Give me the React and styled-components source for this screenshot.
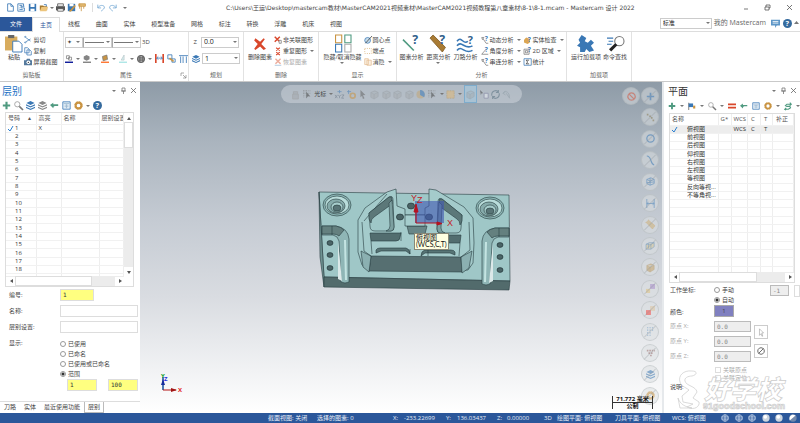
import React from 'react';
import styled, { createGlobalStyle } from 'styled-components';

const GlobalStyle = createGlobalStyle`
  * { box-sizing: border-box; }
  body { margin: 0; }
  body, button, input, select, table {
    font: 6px/8px "Open Sans", "Noto Sans CJK SC", sans-serif;
    color: #444;
  }
  button { background: none; border: 0; padding: 0; white-space: nowrap; }
  input, select { min-width: 0; }
  svg { display: block; flex: none; overflow: visible; }
`;

const blue = '#3a78b5';
const green = '#4f9a80';
const orange = '#c99443';
const red = '#d9472b';
const grey = '#777';

const drawings = {
  page: <path d="M2 1h4l3 3v6H2zM6 1v3h3" fill="#fff" stroke={blue} />,
  pages: <path d="M1 1h7v3M1 1v9h8V6H5V4h4M3 3h3M3 6h1M3 8h4" fill="none" stroke={blue} />,
  save: <><path d="M1 1h9v9H1z" fill={blue} /><path d="M3 1h5v4H3zM3 7h5v3H3z" fill="#fff" /></>,
  open: <><path d="M1 3h4l1 1h4v5H1z" fill="#a57a31" /><path d="M3 5h8l-2 5H1z" fill="#edc57c" /><path d="M6 2h3v2" stroke={blue} fill="none" /></>,
  print: <><path d="M0 4h11v5H0z" fill="#555" /><path d="M2 1h7v3H2zM2 7h7v3H2z" fill="#fff" stroke="#555" /></>,
  saveAs: <><path d="M1 1h9v9H1z" fill={blue} /><path d="M3 1h5v3H3z" fill="#fff" /><path d="M10 3L5 9l-2 1" stroke={orange} strokeWidth="2" /></>,
  brush: <path d="M1 1h8v3H1zM4 4v6M2 1v6M7 4v3" fill="#e3bc75" stroke={orange} />,
  undo: <path d="M1 2v4h4M1 6c3-5 9-3 8 0-1 2-3 3-4 4" fill="none" stroke="#76a9d4" />,
  redo: <path d="M10 2v4H6M10 6C7 1 1 3 2 6c1 2 3 3 4 4" fill="none" stroke="#76a9d4" />,
  paste: <><path d="M0 1h8v9H0z" fill="#d8ac5e" /><path d="M2 0h4v2H2z" fill="#666" /><path d="M5 4h4l2 2v5H5z" fill="#fff" stroke={blue} strokeWidth=".6" /></>,
  cut: <path d="M1 1l8 6M1 9l8-5M1 8a1 1 0 1 0 2 1M1 2a1 1 0 1 1 2-1" fill="none" stroke={blue} />,
  copy: <path d="M1 1h4l2 2v5H1zM4 4h4l2 2v5H4z" fill="#fff" stroke={blue} />,
  camera: <><path d="M0 3h3l1-2h4l1 2h2v7H0z" fill="#557a9d" /><circle cx="6" cy="6" r="2.5" fill="#fff" /><circle cx="6" cy="6" r="1" fill="#333" /></>,
  cross: <path d="M2 1l4 3 3-3 1 1-3 4 4 4-2 1-3-3-4 3-1-1 3-4-3-3z" fill={red} />,
  crossBox: <><path d="M1 1l7 7M8 1L1 8" stroke={red} strokeWidth="2" /><path d="M7 6h3v4H7z" fill="#fff" stroke={grey} /></>,
  crossTwo: <path d="M3 1l5 4M8 1L3 5M3 7l5 4M8 7l-5 4" stroke={red} strokeWidth="1.5" />,
  crossPale: <><path d="M2 1l7 7M9 1L2 8" stroke="#ecac9b" strokeWidth="2" /><path d="M1 10h9" stroke="#93b8d6" /></>,
  hide: <g fill="#fff" strokeWidth=".7"><path d="M1 0h4v5H1z" stroke={orange} /><path d="M7 0h4v5H7z" stroke={green} /><path d="M1 6h4v5H1z" stroke={blue} /><path d="M7 6h4v5H7z" stroke="#aaa" /></g>,
  center: <><circle cx="5" cy="6" r="4" fill="#c6dceb" stroke={blue} /><path d="M2 10L11 0" stroke="#333" /></>,
  ends: <path d="M1 2h9v7H1z" fill="none" stroke={orange} strokeDasharray="1 2" />,
  blank: <path d="M1 1h5v8H1zM4 3h6v7H4z" fill="#fcf1e3" stroke="#e4bd94" />,
  analyze: <><path d="M0 3l7 7" stroke={green} /><text x="6" y="6" fontSize="8" fontWeight="700" fill="#315f8c">?</text></>,
  distance: <><path d="M0 2l2-2 8 8-2 3z" fill="#a97b34" stroke="#79551d" strokeWidth=".5" /><text x="6" y="6" fontSize="8" fontWeight="700" fill="#315f8c">?</text></>,
  waves: <><path d="M0 4c3-4 4 3 7 0M0 7c3-4 5 3 10 0M0 10c3-4 5 3 10 0" fill="none" stroke={blue} /><text x="7" y="6" fontSize="7" fontWeight="700" fill="#315f8c">?</text></>,
  dynamic: <><path d="M1 2h3L2 5zM3 4l4 6h3" fill="none" stroke={grey} /><text x="5" y="7" fontSize="9" fontWeight="700" fill={blue}>?</text></>,
  angle: <><path d="M7 3L1 10h9" fill="none" stroke={grey} /><text x="5" y="7" fontSize="9" fontWeight="700" fill={blue}>?</text></>,
  solidCheck: <><path d="M0 5l3-3 5 2v5l-3 2-5-2z" fill="#dba653" /><text x="5" y="8" fontSize="9" fontWeight="700" fill={blue}>?</text></>,
  area: <><path d="M0 3h7v7H0zM2 5h3v3H2z" fill="none" stroke={grey} /><text x="5" y="7" fontSize="9" fontWeight="700" fill={blue}>?</text></>,
  sum: <><path d="M0 1h10v9H0z" fill="#fff" stroke={blue} /><path d="M7 3H3l2 2.5L3 8h4" fill="none" stroke="#333" /></>,
  puzzle: <path d="M1 3l2-3 3 2-1 2 2 1 2-2 2 2-2 2 2 3-3 1-2-2-1 2H2V8L0 7l2-2z" fill={blue} />,
  finder: <><circle cx="8" cy="4" r="3" fill="#fff" stroke="#777" strokeWidth=".7" /><path d="M2 10l4-4" stroke="#222" strokeWidth="2" /><path d="M0 2h4M1 4h3M0 6h3" stroke={blue} strokeWidth=".7" /></>,
  wireColor: <><path d="M2 1h4v4H2zM5 3h4v4H5z" fill="none" stroke={grey} /><path d="M0 9h11v2H0z" fill="#111e9b" /></>,
  solidColor: <><path d="M5 0l4 2v4L5 8 1 6V2z" fill="#858585" /><path d="M0 9h11v2H0z" fill="#858585" /></>,
  surfaceColor: <><path d="M2 2l6-2 1 6-6 2z" fill={orange} stroke={grey} /><path d="M0 9h11v2H0z" fill="#ff7a37" /></>,
  pointColor: <><path d="M3 7l4-7v7z" fill="#d9eff0" stroke="#b7c9ca" /><path d="M0 9h11v2H0z" fill="#afe7e7" /></>,
  globe: <><circle cx="5.5" cy="5.5" r="5" fill="#aaa" stroke="#444" /><path d="M1 4h9M1 7h9M4 1v9M8 1v9" stroke="#555" /></>,
  levelMove: <><path d="M1 0v11M10 0v11" stroke={red} strokeWidth="2" /><path d="M2 5h7M4 3L2 5l2 2M7 3l2 2-2 2" fill="none" stroke={blue} /></>,
  squares: <><path d="M1 1h5v5H1zM6 6h4v4H6z" fill="#fff" stroke={blue} /><path d="M3 5l5 4" stroke={orange} strokeWidth="2" /></>,
  comb: <path d="M0 2h11M2 3v8M5 3v8M9 3v8" stroke={blue} fill="none" />,
  layers: <path d="M5.5 0l5 2.5-5 2.5-5-2.5zM0 4l5.500 2.500L11 4v1.500L5.500 8 0 5.500zM0 7l5.500 2.500L11 7v1.500L5.500 11 0 8.500z" fill={blue} />,
  layersGrey: <path d="M5.5 0l5 2.500-5 2.500-5-2.500zM0 4l5.500 2.500L11 4v1.500L5.500 8 0 5.500zM0 7l5.500 2.500L11 7v1.500L5.500 11 0 8.500z" fill="#888" />,
  plus: <path d="M5.500 1v9M1 5.500h9" stroke={green} strokeWidth="2.600" />,
  search: <><circle cx="4" cy="4" r="3.200" fill="none" stroke="#999" /><path d="M6.500 6.500L11 11" stroke="#777" strokeWidth="2" /></>,
  back: <path d="M0 5l4-3v2h6v2H6c-1 0-2 1-2 3z" fill={green} />,
  sheet: <><path d="M1 1h9v9H1z" fill="#edf4fa" stroke={blue} /><path d="M2 3h7M3 5h5M3 7h5M5.500 4v5" stroke="#9ab8d0" /></>,
  gear: <><circle cx="5.500" cy="5.500" r="3.500" fill="none" stroke={orange} strokeWidth="2.500" /><circle cx="5.500" cy="5.500" r="4.700" fill="none" stroke={orange} strokeDasharray="2 1.700" /></>,
  help: <><circle cx="5.500" cy="5.500" r="5.500" fill="#356a9d" /><text x="3.200" y="9" fontSize="9" fontWeight="700" fill="#fff">?</text></>,
  chat: <><path d="M0 1h11v7H7l-2 3V8H0z" fill="#5d96c7" /><path d="M2 3h7M2 5h7" stroke="#fff" /></>,
  flag: <><path d="M1 1v10" stroke="#555" /><path d="M1 2h6v5H1z" fill={blue} /><path d="M7 5h3v4H7z" fill={orange} /></>,
  equal: <path d="M0 2h11v2.500H0zM0 6.500h11V9H0z" fill={red} />,
  cycle: <path d="M9 3H4L2 5l2 1h4l1 2-3 2H1M8 1l2 2-2 2M3 8l-2 2 2 1" fill="none" stroke={green} strokeWidth="1.500" />,
  cube: <path d="M1 3l5-2 4 2v5l-5 3-4-2zM1 3l4 2 5-2M5 5v6" fill="#c7a469" stroke="#a8874f" strokeWidth=".6" />,
  cubeGrey: <path d="M1 3l5-2 4 2v5l-5 3-4-2zM1 3l4 2 5-2M5 5v6" fill="#a8adb2" stroke="#8b9197" strokeWidth=".6" />,
  lock: <path d="M2 5h7v6H2zM3 5V2h5v3" fill="#a3a8ad" stroke="#999" />,
  cursor: <path d="M3 0l6 6-3 .5L8 10l-2 1-1-4-2 2z" fill="#666" />,
  selectBox: <><path d="M0 1h10M0 4h10M1 0v10M4 0v10" stroke="#777" strokeDasharray="1" /><path d="M4 2l5 6-3-.5-2 3z" fill="#444" /></>,
  xyz: <><path d="M5.500 0v4M3 2h5" stroke={blue} /><path d="M0 6l3 4M3 6l-3 4M4 6l1.500 2L7 6M5.500 8v2M8 6h3l-3 4h3" fill="none" stroke="#567" strokeWidth=".8" /></>,
  plusGear: <><path d="M2 0v5M0 2h5" stroke={blue} /><circle cx="7" cy="7" r="3" fill="none" stroke={orange} strokeWidth="2" /></>,
  pie: <><circle cx="5.500" cy="5.500" r="5" fill="#c3a777" /><path d="M5 0v6l5 3c2-4 0-9-5-9" fill={blue} /></>,
  window: <path d="M1 1h9v9H1z" fill="#dfb878" stroke="#b98a3c" strokeDasharray="1" />,
  pickDoc: <><path d="M0 0l4 4-2 0-1 2z" fill="#444" /><path d="M5 4h5v6H5z" fill="#e8eef2" stroke="#779" /></>,
  spin: <path d="M1 7c-1-6 6-8 8-4M10 4c1 6-6 8-8 4M9 0v3H6M2 11V8h3" fill="none" stroke="#577180" strokeWidth="1.300" />,
  turn: <path d="M0 4c3-4 8-2 8 6M3 1L0 4l3 2M4 4l4 6" fill="none" stroke="#8b99a2" />,
  bluePlus: <path d="M5.500 1v9M1 5.500h9" stroke={blue} strokeWidth="2" />,
  points: <path d="M1 2h2M4 4h2M6 6h2M8 9h2" stroke="#887a52" strokeWidth="2" />,
  ring: <circle cx="5.500" cy="5.500" r="4.500" fill="none" stroke={blue} strokeWidth="1.500" />,
  curve: <path d="M1 0c6 0 4 10 9 11" stroke={blue} fill="none" strokeWidth="1.500" />,
  wireCube: <path d="M1 3l5-2 4 2v5l-5 2-4-2zM1 3l4 2 5-2M5 1v9M1 7l9-1" fill="none" stroke={blue} />,
  dimension: <path d="M1 0v11M10 0v11M1 5.500h9M3 4L1 5.500 3 7M8 4l2 1.500L8 7" fill="none" stroke={blue} />,
  ruler: <path d="M0 3l3-3 8 7-3 4z" fill="#cdb078" stroke={orange} strokeDasharray="1" />,
  meshCube: <path d="M0 4l4-2h6v5l-4 3H0zM0 4h6l4-2M6 4v6M3 3v6" fill="#d7c696" stroke={blue} strokeWidth=".7" />,
  purple: <><path d="M5 0h6v6H5z" fill="#a98dcc" /><path d="M0 6h5v5H0z" fill="#dfc27f" /></>,
  redBox: <><path d="M5 0h6v6H5z" fill="#dfc6a1" /><path d="M0 5h6v6H0z" fill="#f5443f" /></>,
  bars: <path d="M2 0v11M5 0v11M8 0v5" stroke="#6e9bc7" strokeWidth="1.500" strokeDasharray="1 1" />,
  dots: <path d="M1 2h10M3 5h6M5 8h2" stroke="#9b7070" strokeWidth="2" strokeDasharray="2 1" />,
  ban: <path d="M2 2l7 7M5.500 1a4.500 4.500 0 1 0 .1 0z" stroke="currentColor" fill="none" strokeWidth="1.500" />,
  noEntry: <path d="M2 9l7-7M5.500 1a4.500 4.500 0 1 0 .1 0z" stroke="#555" fill="none" strokeWidth="1.200" />,
  pointer: <path d="M3 1l5 5-2 0 1 4-1 0-1-3-2 2z" fill="#fff" stroke="#999" strokeWidth=".7" />,
  wireGlobe: <path d="M5.500 1a4.500 4.500 0 1 0 .1 0zM1 4h9M1 7h9M5.500 1v9" fill="none" stroke="#dce7f5" />,
  sphere: <><circle cx="5.500" cy="5.500" r="5" fill="#ccd5df" /><circle cx="4.500" cy="4" r="2.500" fill="#fff" /></>,
  halfSphere: <><circle cx="5.500" cy="5.500" r="5" fill="#7389ac" /><path d="M1 9C-1 3 4-1 9 2z" fill="#fff" /></>,
};

const Icon = ({ name, size = 9 }) => (
  <svg width={size} height={size} viewBox="0 0 11 11" aria-hidden="true">{drawings[name]}</svg>
);

const App = styled.div`
  display: grid;
  grid-template-rows: 17px 15px 50px minmax(0, 1fr) 10px;
  height: 100vh;
  background: #fff;
  overflow: hidden;
`;

const Caret = styled.i`
  flex: none;
  border: solid transparent;
  border-width: 2px 2px 0;
  border-top-color: #777;
`;

const TitleBar = styled.header`
  display: grid;
  grid-template-columns: 136px 1fr 64px;
  align-items: center;
  padding: 0 0 2px 6px;
`;
const QuickBar = styled.div`
  display: flex;
  align-items: center;
  gap: 2px;
  & > i:last-child { margin-left: 4px; }
`;
const QuickButton = styled.button`
  margin-left: ${p => (p.$split ? '3px' : 0)};
  border-left: ${p => (p.$split ? '1px solid #ddd' : 0)};
  padding-left: ${p => (p.$split ? '4px' : 0)};
`;
const FileName = styled.h1`
  margin: 0;
  padding-left: 84px;
  font-family: "DejaVu Sans", "Noto Sans CJK SC", sans-serif;
  font-size: 6px;
  font-weight: 400;
  white-space: nowrap;
`;
const WindowButtons = styled.div`
  display: flex;
  justify-content: space-around;
  align-items: center;
  svg { fill: none; stroke: #555; }
`;

const TabBar = styled.nav`
  display: flex;
  border-bottom: 1px solid #ddd;
`;
const FileTab = styled.button`
  width: 32px;
  background: #2b579a;
  color: #fff;
`;
const ActiveTab = styled.button`
  width: 28px;
  margin-bottom: -1px;
  border: 1px solid #ddd;
  border-bottom: 0;
  background: #fff;
  color: #2b579a;
`;
const TabList = styled.div`
  display: flex;
  justify-content: space-between;
  flex: 0 1 282px;
  padding-left: 8px;
`;
const Account = styled.div`
  display: flex;
  align-items: center;
  gap: 2px;
  margin-left: auto;
  padding: 0 1px 2px 0;
  font-size: 7px;
  a { color: #666; text-decoration: none; }
  button:first-of-type { margin-left: 3px; }
  button + button { margin-left: 1px; }
`;

const ComboBox = styled.span`
  position: relative;
  display: flex;
  width: ${p => p.$width}px;
  height: 11px;
  select {
    width: 100%;
    appearance: none;
    border: 1px solid #ccc;
    border-radius: 0;
    padding: 0 8px 0 2px;
    background: #fff;
    font-size: ${p => p.$size || 7}px;
    color: #222;
  }
  i { position: absolute; right: 2px; top: 4px; }
`;
const Combo = ({ label, value, ...rest }) => (
  <ComboBox {...rest}><select aria-label={label}><option>{value}</option></select><Caret /></ComboBox>
);

const Ribbon = styled.div`
  display: flex;
  border-bottom: 1px solid #c9c9c9;
`;
const GroupBox = styled.section`
  display: grid;
  grid-template-rows: 33px 1fr;
  width: ${p => p.$width}px;
  padding: 2px 0 1px;
  border-right: 1px solid #e2e2e2;
`;
const GroupBody = styled.div`
  display: flex;
  align-items: stretch;
  justify-content: center;
  gap: ${p => p.$gap || 2}px;
`;
const GroupName = styled.h2`
  position: relative;
  display: flex;
  align-items: center;
  justify-content: center;
  margin: 3px 0 0;
  font-size: 6px;
  font-weight: 400;
  color: #666;
  svg { position: absolute; right: 2px; }
`;
const Group = ({ name, width, gap, launcher, children }) => (
  <GroupBox $width={width}>
    <GroupBody $gap={gap}>{children}</GroupBody>
    <GroupName>
      {name}
      {launcher && <svg width="5" height="5" viewBox="0 0 5 5"><path d="M0 3V0h3M2 2l3 3V2M5 5H2" fill="none" stroke="#888" strokeWidth=".7" /></svg>}
    </GroupName>
  </GroupBox>
);
const BigButton = styled.button`
  display: flex;
  flex-direction: column;
  align-items: center;
  gap: 1px;
  padding-top: 1px;
  svg { margin: ${p => (p.$small ? '2px' : 0)}; }
`;
const Big = ({ icon, text, menu, size = 17 }) => (
  <BigButton $small={size < 17}><Icon name={icon} size={size} /><span>{text}</span>{menu && <Caret />}</BigButton>
);
const Stack = styled.div`
  display: grid;
  grid-template-rows: repeat(${p => p.$rows || 3}, 1fr);
`;
const SmallButton = styled.button`
  display: flex;
  align-items: center;
  gap: 1px;
  color: ${p => (p.$pale ? '#aaa' : '#444')};
  i { margin-left: 2px; }
`;
const Small = ({ icon, text, menu, pale }) => (
  <SmallButton $pale={pale}><Icon name={icon} size={8} /><span>{text}</span>{menu && <Caret />}</SmallButton>
);
const ToolRow = styled.div`
  display: flex;
  align-items: center;
  gap: ${p => p.$gap || 0}px;
`;
const LineBox = styled.button`
  display: flex;
  align-items: center;
  justify-content: space-around;
  width: ${p => p.$width}px;
  height: 11px;
  border: 1px solid #ccc;
  & + & { border-left: 1px solid #aaa; }
`;
const Stroke = styled.i`
  width: 19px;
  border-top: 1px solid #777;
`;

const Main = styled.main`
  display: grid;
  grid-template-columns: 140px minmax(0, 1fr) 138px;
  min-height: 0;
`;
const Panel = styled.aside`
  display: flex;
  flex-direction: column;
  min-width: 0;
  overflow: hidden;
  background: #fff;
  padding-left: ${p => p.$indent || 0}px;
  border-left: ${p => (p.$indent ? '2px solid #e6e9ec' : 0)};
`;
const PanelHead = styled.div`
  display: flex;
  align-items: center;
  gap: 5px;
  height: 17px;
  padding: 0 4px 0 2px;
  h2 {
    flex: 1;
    margin: 0;
    font-size: 10px;
    line-height: 16px;
    font-weight: 400;
    color: ${p => p.$color};
  }
  button { display: flex; }
`;
const PanelTools = styled.div`
  display: flex;
  align-items: center;
  gap: ${p => p.$gap}px;
  height: 13px;
  padding-left: 2px;
`;
const PanelTitle = ({ title, color }) => (
  <PanelHead $color={color}>
    <h2>{title}</h2>
    <button aria-label="菜单"><Caret /></button>
    <button aria-label="固定"><svg width="5" height="6" viewBox="0 0 5 6"><path d="M1 0h3v3H1zM0 3h5M2.500 3v3" fill="none" stroke="#777" strokeWidth=".8" /></svg></button>
    <button aria-label="关闭"><svg width="5" height="5" viewBox="0 0 5 5"><path d="M0 0l5 5M5 0L0 5" stroke="#666" strokeWidth=".8" /></svg></button>
  </PanelHead>
);

const ListFrame = styled.div`
  display: grid;
  grid-template-columns: minmax(0, 1fr) ${p => (p.$vertical ? '9px' : '0')};
  grid-template-rows: ${p => p.$height}px 10px;
  margin: ${p => p.$margin};
  border: 1px solid #ddd;
`;
const Clip = styled.div`
  overflow: hidden;
`;
const Table = styled.table`
  width: 100%;
  height: ${p => p.$height}px;
  table-layout: fixed;
  border-collapse: collapse;
  th, td {
    height: 8px;
    padding: 0 0 0 2px;
    border-right: 1px solid #eee;
    border-bottom: 1px solid #f1f1f1;
    line-height: 7px;
    font-weight: 400;
    text-align: left;
    white-space: nowrap;
    overflow: hidden;
    color: #333;
  }
  th { height: 11px; color: #555; }
  tr { background: #fff; }
`;
const PlaneRow = styled.tr`
  && { background: ${p => (p.$active ? '#ededed' : '#fff')}; }
  && td:first-child { border-right: 0; }
  && td:nth-child(2) { padding: 0; }
`;
const NumberCell = styled.td`
  svg { display: inline-block; vertical-align: middle; margin-right: 2px; }
  span { margin-left: ${p => (p.$checked ? 0 : '7px')}; }
`;
const Track = styled.div`
  display: flex;
  flex-direction: ${p => (p.$vertical ? 'column' : 'row')};
  justify-content: space-between;
  align-items: center;
  grid-column: ${p => (p.$vertical ? 2 : 1)};
  grid-row: ${p => (p.$vertical ? 1 : 2)};
  background: #ececec;
  button {
    display: flex;
    align-items: center;
    justify-content: center;
    width: 9px;
    height: 9px;
    background: #fff;
  }
`;
const Thumb = styled.div`
  flex: 0 0 ${p => p.$size};
  align-self: stretch;
  margin-${p => (p.$vertical ? 'bottom' : 'right')}: auto;
  border: 1px solid #ddd;
  background: #fff;
`;
const arrows = { up: 'M0 4l2-3 2 3z', down: 'M0 1l2 3 2-3z', left: 'M4 0L1 2l3 2z', right: 'M1 0l3 2-3 2z' };
const Arrow = ({ dir }) => (
  <button aria-label={dir}><svg width="4" height="4" viewBox="0 0 4 4"><path d={arrows[dir]} fill="#555" /></svg></button>
);
const Scroll = ({ vertical, size }) => (
  <Track $vertical={vertical}>
    <Arrow dir={vertical ? 'up' : 'left'} />
    <Thumb $size={size} $vertical={vertical} />
    <Arrow dir={vertical ? 'down' : 'right'} />
  </Track>
);
const Check = () => (
  <svg width="5" height="5" viewBox="0 0 5 5"><path d="M0 3l2 2 3-5" fill="none" stroke="#2a7fd0" /></svg>
);

const LevelForm = styled.form`
  display: grid;
  grid-template-columns: 51px 1fr;
  grid-auto-rows: 12px;
  row-gap: 4px;
  align-items: center;
  padding: 2px 2px 0 9px;
`;
const Field = styled.input`
  width: ${p => p.$width || '100%'};
  height: ${p => p.$height || 12}px;
  border: 1px solid ${p => (p.$dim ? '#bbb' : '#ddd')};
  padding: 0 1px 1px 2px;
  background: ${p => (p.$yellow ? '#ffff80' : p.$dim ? '#eee' : '#fff')};
  font-family: "DejaVu Sans Mono", monospace;
  color: ${p => (p.$dim ? '#888' : '#333')};
`;
const Options = styled.div`
  display: grid;
  grid-auto-rows: 10px;
  align-items: center;
  align-self: start;
  padding-top: ${p => p.$top || 0}px;
`;
const Option = styled.label`
  display: flex;
  align-items: center;
  gap: 2px;
  white-space: nowrap;
  color: ${p => (p.$dim ? '#aaa' : '#444')};
  input {
    appearance: none;
    width: 6px;
    height: 6px;
    margin: 0;
    border: 1px solid ${p => (p.$dim ? '#ddd' : '#999')};
    border-radius: ${p => (p.$dim ? 0 : '50%')};
    background: #fff;
  }
  input[type='radio']:checked { background: radial-gradient(#333 1px, #fff 2px); }
`;
const RangeRow = styled.div`
  display: flex;
  justify-content: space-between;
  padding: 2px 0 0 7px;
`;
const BottomTabs = styled.nav`
  display: flex;
  height: 12px;
  margin-top: auto;
  border-top: 1px solid #ddd;
`;
const BottomTab = styled.button`
  padding: 0 3px;
  border: solid ${p => (p.$active ? '#bbb' : 'transparent')};
  border-width: 0 1px 1px 1px;
`;

const Viewport = styled.section`
  position: relative;
  overflow: hidden;
  background: linear-gradient(#8e9ba7, #aab4be 18%, #c5cbd3 42%, #d9dce1 65%, #fff);
`;
const Selection = styled.div`
  position: absolute;
  left: 141px;
  right: 140px;
  top: 3px;
  height: 18px;
  display: flex;
  align-items: center;
  justify-content: space-between;
  padding: 0 10px 0 10px;
  border-radius: 9px;
  background: rgba(220, 225, 230, .45);
  svg { opacity: .55; }
`;
const Highlight = styled.button`
  height: 18px;
  padding: 0 1px;
  border: 1px solid #7eaccc;
  background: #a9c2d3;
`;
const FilterColumn = styled.div`
  position: absolute;
  right: 3px;
  top: 5px;
  bottom: 8px;
  display: flex;
  flex-direction: column;
  justify-content: space-between;
`;
const RoundButton = styled.button`
  position: relative;
  display: grid;
  place-items: center;
  width: 18px;
  height: 18px;
  border: 1px solid rgba(160, 165, 170, .35);
  border-radius: 50%;
  background: rgba(220, 223, 226, .5);
  color: #d2533d;
  svg { opacity: .55; }
  &::after {
    content: '';
    position: absolute;
    width: 16px;
    border-top: 1px solid rgba(150, 155, 160, .35);
    transform: rotate(-45deg);
  }
`;
const ClearFilter = styled.div`
  position: absolute;
  right: 22px;
  top: 5px;
  button::after { display: none; }
`;
const Part = styled.svg`
  position: absolute;
  left: 175px;
  top: 103px;
`;
const Tip = styled.div`
  position: absolute;
  left: 274px;
  top: 151px;
  padding: 0 1px 1px;
  border: 1px solid #887;
  background: #ffffe1;
  font-family: Lato, "Noto Sans CJK SC", sans-serif;
  font-size: 7px;
  line-height: 7px;
  color: #111;
`;
const Triad = styled.svg`
  position: absolute;
  left: 18px;
  bottom: 20px;
`;
const Scale = styled.div`
  position: absolute;
  right: 9px;
  bottom: 4px;
  width: 41px;
  border: solid #333;
  border-width: 0 1px;
  font-weight: 700;
  line-height: 6px;
  text-align: center;
  color: #111;
  div + div { border-top: 1px solid #333; }
`;

const PlaneForm = styled.form`
  display: grid;
  grid-template-columns: 44px 1fr;
  padding: 2px 0 0 4px;
`;
const PlaneLabel = styled.label`
  line-height: ${p => p.$line || 10}px;
  color: ${p => (p.$dim ? '#aaa' : '#444')};
`;
const CoordRow = styled.div`
  display: grid;
  grid-template-columns: 51px 19px 1fr;
  column-gap: 5px;
`;
const Swatch = styled.button`
  width: 20px;
  height: 12px;
  border: 1px solid #aaa;
  background: #8080c0;
`;
const OriginRows = styled.div`
  display: grid;
  grid-template-columns: 37px 14px;
  column-gap: 3px;
  padding-top: 2px;
`;
const OriginFields = styled.div`
  display: grid;
  grid-auto-rows: 15px;
`;
const PickButtons = styled.div`
  display: flex;
  flex-direction: column;
  gap: 5px;
  padding-top: 4px;
  button {
    display: grid;
    place-items: center;
    height: 14px;
    border: 1px solid #ccc;
  }
`;
const Links = styled.div`
  grid-column: 2;
  display: grid;
  grid-auto-rows: 8px;
  padding-left: 1px;
`;
const Watermark = styled.svg`
  position: absolute;
  right: 12px;
  bottom: 10px;
  pointer-events: none;
`;

const StatusBar = styled.footer`
  display: flex;
  align-items: center;
  padding-left: 268px;
  background: #2b579a;
  color: #e8eef7;
  white-space: nowrap;
`;
const StatusItem = styled.span`
  flex: 0 0 ${p => p.$width}px;
`;
const ViewModes = styled.div`
  display: flex;
  align-items: center;
  justify-content: space-between;
  flex: 1;
  padding: 0 3px 0 1px;
`;

const tabs = ['线框', '曲面', '实体', '模型准备', '网格', '标注', '转换', '浮雕', '机床', '视图'];
const levels = Array.from({ length: 19 }, (_, i) => i + 1);
const planes = ['俯视图', '前视图', '后视图', '仰视图', '右视图', '左视图', '等视图', '反向等视...', '不等角视...'];
const planeRows = Array.from({ length: 18 }, (_, i) => planes[i] || '');
const filters = ['bluePlus', 'points', 'ring', 'curve', 'wireCube', 'dimension', 'ruler', 'meshCube', 'cube', 'purple', 'redBox', 'bars', 'dots', 'layers', 'gear'];
const status = [
  ['截面视图: 关闭', 49], ['选择的图素: 0', 76], ['X:', 11], ['-233.22699', 42], ['Y:', 11], ['136.03437', 40], ['Z:', 10],
  ['0.00000', 37], ['3D', 13], ['绘图平面: 俯视图', 58], ['刀具平面: 俯视图', 57], ['WCS: 俯视图', 48],
];

const Bore = ({ x, y }) => (
  <g stroke="#24393a" strokeWidth=".6">
    <ellipse cx={x} cy={y} rx="14" ry="11" fill="#8db6b6" />
    <ellipse cx={x} cy={y} rx="12" ry="9" fill="#b9dddb" />
    <ellipse cx={x - 1} cy={y + 1} rx="9" ry="7" fill="#86abab" />
    <ellipse cx={x} cy={y + 2} rx="6" ry="5" fill="#a6cccb" />
    <ellipse cx={x} cy={y + 3} rx="4" ry="3" fill="#587476" />
  </g>
);
const Hole = ({ x, y, r = 3 }) => (
  <ellipse cx={x} cy={y} rx={r} ry={r - 0.6} fill="#4a6466" stroke="#1b2e30" strokeWidth=".6" />
);
const Side = () => (
  <g>
    <path d="M322 226h14q12 2 13 13v43q-4 2-8 0l-2-41q-1-5-6-6h-11z" fill="#8fb6b6" />
    <path d="M322 226h14q5 1 8 4l-5 6q-2-2-6-2h-11z" fill="#64807f" />
    <path d="M332 226v9" />
    <path d="M338 241l4 40-4-2z" fill="#dce9e9" stroke="none" />
    <path d="M345 240l1 40" stroke="#c4e4e2" strokeWidth="2" />
    <path d="M369 213l20-16q4-2 4 3l1 27q0 4-3 4h-16q-5 0-5-5z" fill="#9fc7c7" />
    <path d="M369 213l20-16q3-1 3 2v5l-18 13q-3 2-3 6l-2-4z" fill="#5c7879" />
    <path d="M392 200l-3 3 1 23q0 4-4 5h5q3 0 3-4z" fill="#7c9fa0" />
    <path d="M370 233h31l-1 4q0 4-4 4h-25z" fill="#526d6f" />
    <path d="M371 241l1 13" />
    <path d="M376 253v-3q1-2 4-2h26q4 1 4 6l-4-3h-25z" fill="#577475" />
  </g>
);

const PartDrawing = () => (
  <Part width="205" height="115" viewBox="315 185 205 115">
    <g fill="none" stroke="#263c3f" strokeWidth=".6" strokeLinejoin="round">
      <path d="M319 192l190 3 1 86-186-4z" fill="#9fc7c7" />
      <path d="M319 192l5 85v10l-4-30z" fill="#6f9292" />
      <path d="M324 277l186 4-1 9-185-3z" fill="#526b6c" />
      <path d="M358 220l7-12 22-16 9-3 1 17 8 3v6h20v-7l4-2v-17l7 1 28 17 9 11 1 25-1 20-5 7h-97l-9-5-4-13z" fill="#a4cbcb" />
      <path d="M371 256l90 1 1 15-93-1z" fill="#566f71" />
      <path d="M361 251l10 5-2 16-6-5zM472 251l-11 6 1 16 7-5z" fill="#8bb0b1" />
      <path d="M362 222l2 29 7 5M364 221l23-27M469 222l1 28-9 7" />
      <Side />
      <g transform="translate(831 2) scale(-1 1)"><Side /></g>
      <path d="M407 226h20l-2 8h-16z" fill="#688687" />
      <path d="M405 215h20v11h-20z" fill="#a5cdcd" />
      <path d="M401 232v9M410 254v-5M428 250v6" />
    </g>
    <Bore x={337} y={205} />
    <Bore x={490} y={208} />
    {[243, 255, 268].map(y => <Hole key={y} x={330} y={y} />)}
    {[245, 257, 270].map(y => <Hole key={y} x={500} y={y} />)}
    <Hole x={400} y={217} r={3.600} />
    <Hole x={411} y={206} r={3.600} />
    <Hole x={429} y={217} r={3.600} />
    <path d="M415 201h29v22h-29z" fill="#4057b2" opacity=".6" />
    <g stroke="#b51220" fill="#b51220">
      <path d="M416 223h22M416 223v-18" strokeWidth="1.200" />
      <path d="M437 222l5 1.500-5 1.500zM414 212l2-8 2 8z" />
    </g>
    <g fill="#c41c27" fontSize="9" fontFamily="Liberation Sans, sans-serif">
      <text x="447" y="226">X</text><text x="411" y="201">Y</text><text x="417" y="203">Z</text>
    </g>
  </Part>
);

export default function MastercamWindow() {
  return (
    <App>
      <GlobalStyle />
      <TitleBar>
        <QuickBar>
          {['page', 'pages', 'save', 'open'].map(n => <QuickButton key={n} aria-label={n}><Icon name={n} /></QuickButton>)}
          <Caret />
          {['print', 'saveAs', 'brush', 'undo', 'redo'].map(n => (
            <QuickButton key={n} aria-label={n} $split={n === 'undo'}><Icon name={n} /></QuickButton>
          ))}
          <Caret />
        </QuickBar>
        <FileName>C:\Users\王运\Desktop\mastercam教材\MasterCAM2021视频素材\MasterCAM2021视频教程第八章素材\8-1\8-1.mcam - Mastercam 设计 2022</FileName>
        <WindowButtons>
          {['M0 4h4', 'M0 2h4v3H0zM1 2V0h4v3H4', 'M0 0l5 5M5 0L0 5'].map(d => (
            <button key={d} aria-label="窗口"><svg width="5" height="5" viewBox="0 0 5 5"><path d={d} strokeWidth=".8" /></svg></button>
          ))}
        </WindowButtons>
      </TitleBar>

      <TabBar>
        <FileTab>文件</FileTab>
        <ActiveTab>主页</ActiveTab>
        <TabList>{tabs.map(t => <button key={t}>{t}</button>)}</TabList>
        <Account>
          <Combo label="模式" value="标准" $width={52} $size={6} />
          <a href="#my">我的 Mastercam</a>
          <button aria-label="反馈"><Icon name="chat" /></button>
          <button aria-label="帮助"><Icon name="help" /></button>
          <svg width="5" height="4" viewBox="0 0 5 4"><path d="M0 3l2.500-3L5 3z" fill="#777" /></svg>
        </Account>
      </TabBar>

      <Ribbon>
        <Group name="剪贴板" width={64}>
          <Big icon="paste" text="粘贴" />
          <Stack>
            <Small icon="cut" text="剪切" />
            <Small icon="copy" text="复制" />
            <Small icon="camera" text="屏幕截图" />
          </Stack>
        </Group>
        <Group name="属性" width={125} launcher>
          <Stack $rows={2}>
            <ToolRow>
              <LineBox $width={18}>✦<Caret /></LineBox>
              <LineBox $width={29}><Stroke /><Caret /></LineBox>
              <LineBox $width={29}><Stroke /><Caret /></LineBox>
              <button>&nbsp;3D</button>
            </ToolRow>
            <ToolRow $gap={3}>
              {['wireColor', 'solidColor', 'surfaceColor', 'pointColor', 'globe'].map(n => (
                <SmallButton key={n} aria-label={n}><Icon name={n} size={8} /><Caret /></SmallButton>
              ))}
              {['levelMove', 'squares', 'comb'].map(n => <button key={n} aria-label={n}><Icon name={n} /></button>)}
            </ToolRow>
          </Stack>
        </Group>
        <Group name="规划" width={55}>
          <Stack $rows={2}>
            <ToolRow $gap={4}>&nbsp;Z<Combo label="Z" value="0.0" $width={38} /></ToolRow>
            <ToolRow $gap={2}><Icon name="layers" size={8} /><Combo label="层别" value="1" $width={38} /></ToolRow>
          </Stack>
        </Group>
        <Group name="删除" width={75}>
          <Big icon="cross" text="删除图素" size={13} />
          <Stack>
            <Small icon="crossBox" text="非关联图形" />
            <Small icon="crossTwo" text="重复图形" menu />
            <Small icon="crossPale" text="恢复图素" pale />
          </Stack>
        </Group>
        <Group name="显示" width={78}>
          <Big icon="hide" text="隐藏/取消隐藏" menu />
          <Stack>
            <Small icon="center" text="圆心点" />
            <Small icon="ends" text="端点" />
            <Small icon="blank" text="消隐" menu />
          </Stack>
        </Group>
        <Group name="分析" width={170} gap={3}>
          <Big icon="analyze" text="图素分析" />
          <Big icon="distance" text="距离分析" menu />
          <Big icon="waves" text="刀路分析" />
          <Stack>
            <Small icon="dynamic" text="动态分析" menu />
            <Small icon="angle" text="角度分析" menu />
            <Small icon="dynamic" text="串连分析" menu />
          </Stack>
          <Stack>
            <Small icon="solidCheck" text="实体检查" menu />
            <Small icon="area" text="2D 区域" menu />
            <Small icon="sum" text="统计" />
          </Stack>
        </Group>
        <Group name="加载项" width={65}>
          <Big icon="puzzle" text="运行加载项" />
          <Big icon="finder" text="命令查找" />
        </Group>
      </Ribbon>

      <Main>
        <Panel>
          <PanelTitle title="层别" color="#2372c5" />
          <PanelTools $gap={3}>
            {['plus', 'search', 'layers', 'layersGrey', 'back', 'sheet', 'gear'].map(n => <button key={n} aria-label={n}><Icon name={n} /></button>)}
            <Caret />
            <button aria-label="帮助"><Icon name="help" /></button>
          </PanelTools>
          <ListFrame $vertical $height={163} $margin="0 6px 0 5px">
            <Clip>
              <Table $height={170}>
                <colgroup><col width="30" /><col width="25" /><col width="38" /><col /></colgroup>
                <thead><tr><th>号码　 ▴</th><th>高亮</th><th>名称</th><th>层别设置</th></tr></thead>
                <tbody>
                  {levels.map(n => (
                    <tr key={n}>
                      <NumberCell $checked={n === 1}>{n === 1 && <Check />}<span>{n}</span></NumberCell>
                      <td>{n === 1 && 'X'}</td><td /><td />
                    </tr>
                  ))}
                </tbody>
              </Table>
            </Clip>
            <Scroll vertical size="26px" />
            <Scroll size="77px" />
          </ListFrame>
          <LevelForm>
            <label htmlFor="number">编号:</label><Field id="number" defaultValue="1" $yellow $width="34px" />
            <label htmlFor="name">名称:</label><Field id="name" />
            <label htmlFor="set">层别设置:</label><Field id="set" />
            <span>显示:</span>
            <Options $top={2}>
              {['已使用', '已命名', '已使用或已命名', '范围'].map(t => (
                <Option key={t}><input type="radio" name="show" defaultChecked={t === '范围'} />{t}</Option>
              ))}
              <RangeRow>
                <Field aria-label="从" defaultValue="1" $yellow $width="30px" />
                <Field aria-label="到" defaultValue="100" $yellow $width="30px" />
              </RangeRow>
            </Options>
          </LevelForm>
          <BottomTabs>
            {['刀路', '实体', '最近使用功能', '层别'].map(t => <BottomTab key={t} $active={t === '层别'}>{t}</BottomTab>)}
          </BottomTabs>
        </Panel>

        <Viewport>
          <Selection>
            <Icon name="lock" /><Icon name="selectBox" /><span>光标</span><Caret />
            <Icon name="xyz" /><Icon name="plusGear" /><Icon name="cursor" />
            <Icon name="cubeGrey" /><Icon name="cubeGrey" /><Icon name="cubeGrey" /><Icon name="cubeGrey" />
            <Icon name="pie" /><Icon name="selectBox" /><Caret /><Icon name="window" /><Caret />
            <Highlight aria-label="选择"><Icon name="cubeGrey" /></Highlight>
            <Icon name="pickDoc" /><Icon name="spin" /><Icon name="turn" />
          </Selection>
          <ClearFilter><RoundButton aria-label="清除"><Icon name="ban" /></RoundButton></ClearFilter>
          <FilterColumn>
            {filters.map(n => <RoundButton key={n} aria-label={n}><Icon name={n} /></RoundButton>)}
          </FilterColumn>
          <PartDrawing />
          <Tip>俯视图<br />(WCS,C,T)</Tip>
          <Triad width="30" height="20" viewBox="0 0 30 20">
            <path d="M5 17V4" stroke="#154e9d" strokeWidth="1.500" /><path d="M3 12l2-6 2 6z" fill="#152d9d" />
            <path d="M5 17h13" stroke="#b41515" /><path d="M13 15l6 2-6 2z" fill="#a11515" />
            <g fontSize="6" fontWeight="700"><text x="20" y="19" fill="#e02020">X</text><text x="6" y="8" fill="#2830e0">Z</text><text x="3" y="5" fill="#11a02f">Y</text></g>
          </Triad>
          <Scale><div>71.772 毫米</div><div>公制</div></Scale>
        </Viewport>

        <Panel $indent={2}>
          <PanelTitle title="平面" color="#333" />
          <PanelTools $gap={4}>
            {['plus', 'flag', 'search', 'equal', 'back', 'sheet', 'gear', 'cycle', 'cube'].map(n => (
              <React.Fragment key={n}>
                <button aria-label={n}><Icon name={n} size={8} /></button>
                {['plus', 'flag', 'search', 'gear', 'cycle'].includes(n) && <Caret />}
              </React.Fragment>
            ))}
          </PanelTools>
          <ListFrame $height={158} $margin="1px 5px 0 3px">
            <Clip>
              <Table $height={161}>
                <colgroup><col width="17" /><col width="31" /><col width="13" /><col width="16" /><col width="13" /><col width="12" /><col /></colgroup>
                <thead><tr><th colSpan="2">名称</th><th>G*</th><th>WCS</th><th>&nbsp;C</th><th>&nbsp;T</th><th>&nbsp;补正</th></tr></thead>
                <tbody>
                  {planeRows.map((name, i) => (
                    <PlaneRow key={i} $active={i === 0}>
                      <td>{i === 0 && <Check />}</td><td>{name}</td><td />
                      <td>{i === 0 && 'WCS'}</td><td>{i === 0 && '\u00a0C'}</td><td>{i === 0 && '\u00a0T'}</td><td />
                    </PlaneRow>
                  ))}
                </tbody>
              </Table>
            </Clip>
            <Scroll size="78px" />
          </ListFrame>
          <PlaneForm>
            <PlaneLabel>工作坐标:</PlaneLabel>
            <CoordRow>
              <Options>
                <Option><input type="radio" name="wcs" />手动</Option>
                <Option><input type="radio" name="wcs" defaultChecked />自动</Option>
              </Options>
              <Field aria-label="坐标" defaultValue="-1" $dim $height={11} />
              <Field as="button" type="button" aria-label="选择坐标" />
            </CoordRow>
            <PlaneLabel htmlFor="swatch" $line={14}>颜色:</PlaneLabel>
            <Swatch id="swatch" type="button">1</Swatch>
            <OriginFields>
              {['X', 'Y', 'Z'].map(a => <PlaneLabel key={a} htmlFor={a} $dim $line={14}>原点 {a}:</PlaneLabel>)}
            </OriginFields>
            <OriginRows>
              <OriginFields>{['X', 'Y', 'Z'].map(a => <Field key={a} id={a} defaultValue="0.0" $dim $height={11} />)}</OriginFields>
              <PickButtons>
                <button type="button" aria-label="选择原点"><Icon name="pointer" /></button>
                <button type="button" aria-label="清除原点"><Icon name="noEntry" size={8} /></button>
              </PickButtons>
            </OriginRows>
            <Links>
              <Option $dim><input type="checkbox" />关联原点</Option>
              <Option $dim><input type="checkbox" />关联定位</Option>
            </Links>
            <PlaneLabel>说明:</PlaneLabel>
          </PlaneForm>
        </Panel>
      </Main>

      <StatusBar>
        {status.map(([text, width]) => <StatusItem key={text} $width={width}>{text}</StatusItem>)}
        <ViewModes>
          {['wireGlobe', 'wireGlobe', 'wireGlobe', 'sphere', 'sphere', 'halfSphere'].map((n, i) => <Icon key={i} name={n} size={8} />)}
        </ViewModes>
      </StatusBar>

      <Watermark width="112" height="46" viewBox="0 0 112 46">
        <g fill="#fff" fillOpacity=".4" stroke="#ccc" strokeWidth=".7">
          <path d="M16 4c-9-1-14 5-12 11 1 4 5 5 9 8l-7 6 1 6 10 2-6 3c8 4 13-1 12-5l-6-4 4-6c-1-6-11-6-12-11-1-3 3-5 7-5 5-1 6-5 0-5z" />
          <path d="M2 31c2 6 7 9 14 10H4z" />
          <text x="28" y="32" fontFamily="Noto Sans CJK SC" fontWeight="900" fontSize="26" fontStyle="italic">好学校</text>
          <text x="27" y="42" fontFamily="Liberation Sans" fontWeight="700" fontSize="9">91goodschool.com</text>
        </g>
      </Watermark>
    </App>
  );
}
